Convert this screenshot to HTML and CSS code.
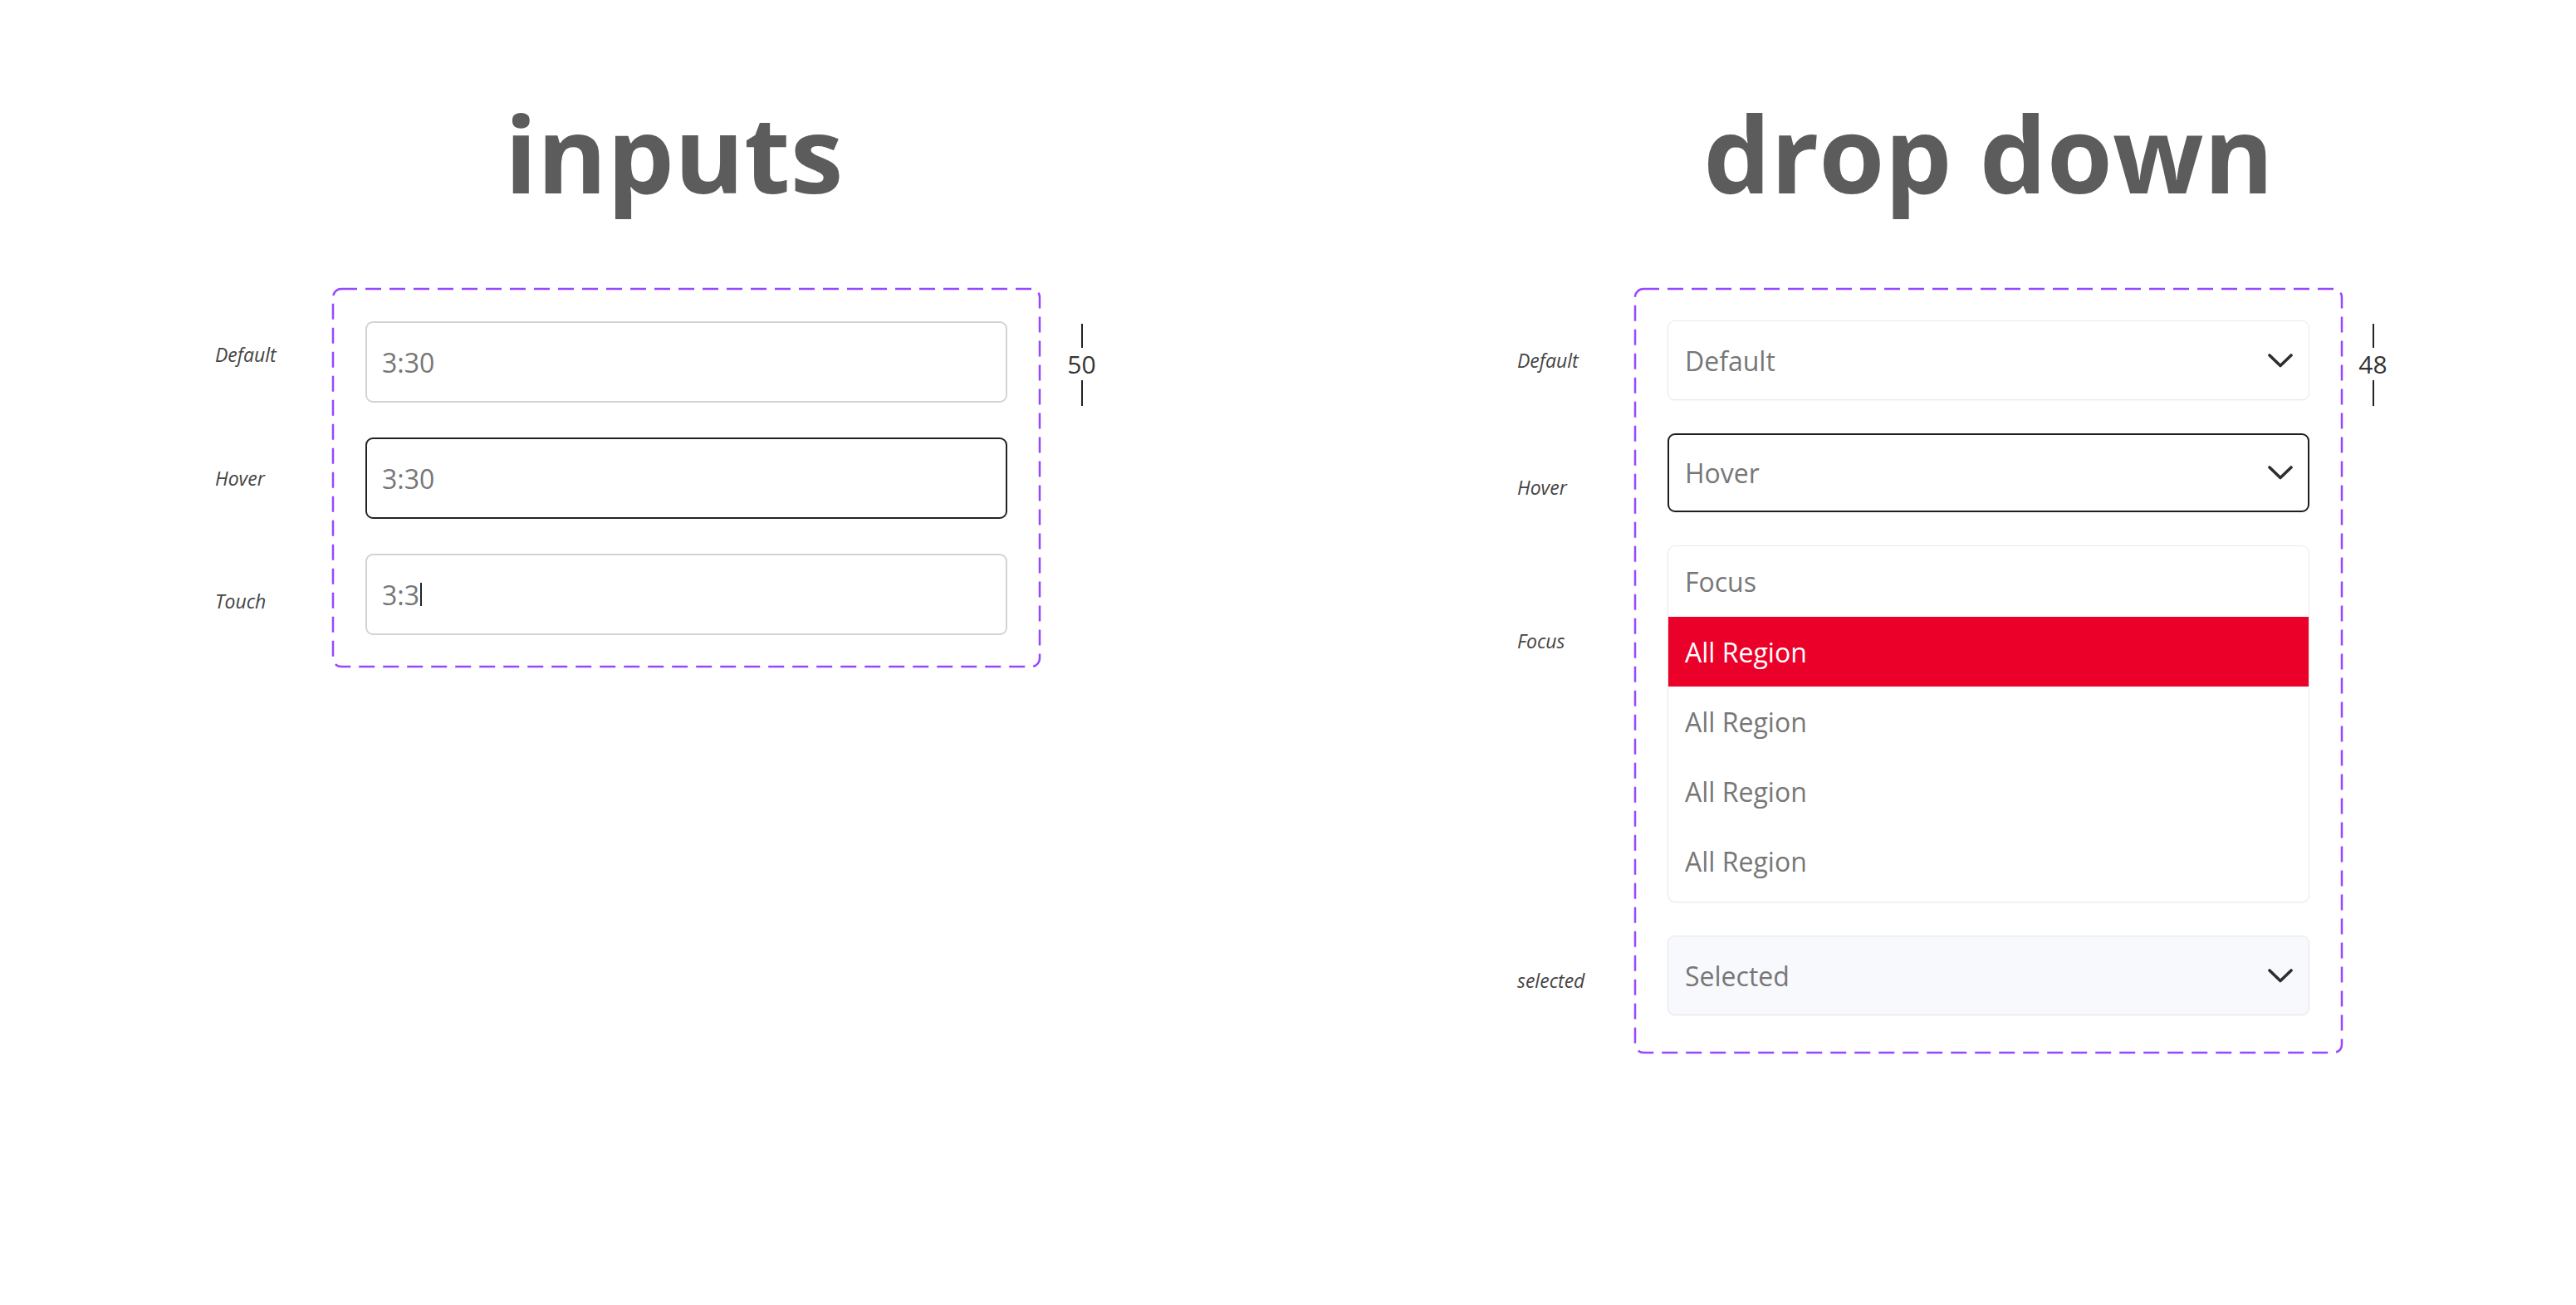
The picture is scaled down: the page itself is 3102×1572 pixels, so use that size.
FILE: index.html
```html
<!DOCTYPE html>
<html lang="en">
<head>
<meta charset="utf-8">
<title>inputs / drop down</title>
<link rel="stylesheet" href="styles.css">
</head>
<body>
<main class="page">
  <section class="section">
    <h1 class="title title-left">inputs</h1>
    <div class="box box-inputs">
      <svg class="dash" aria-hidden="true"><rect></rect></svg>
      <div class="row">
        <span class="label lbl-up">Default</span>
        <div class="input">3:30</div>
        <div class="measure m-left">
          <span class="m-line m-top"></span>
          <span class="m-text">50</span>
          <span class="m-line m-bottom"></span>
        </div>
      </div>
      <div class="row">
        <span class="label">Hover</span>
        <div class="input input-hover">3:30</div>
      </div>
      <div class="row">
        <span class="label lbl-down">Touch</span>
        <div class="input">3:3<span class="caret"></span></div>
      </div>
    </div>
  </section>

  <section class="section">
    <h1 class="title">drop down</h1>
    <div class="box box-drop">
      <svg class="dash" aria-hidden="true"><rect></rect></svg>
      <div class="row">
        <span class="label">Default</span>
        <div class="select">
          <span class="select-text">Default</span>
          <svg class="chev" viewBox="0 0 30 17" aria-hidden="true"><path d="M2 2 L15 14.5 L28 2"/></svg>
        </div>
        <div class="measure m-right">
          <span class="m-line m-top"></span>
          <span class="m-text">48</span>
          <span class="m-line m-bottom"></span>
        </div>
      </div>
      <div class="row">
        <span class="label lbl-hover">Hover</span>
        <div class="select select-hover">
          <span class="select-text">Hover</span>
          <svg class="chev" viewBox="0 0 30 17" aria-hidden="true"><path d="M2 2 L15 14.5 L28 2"/></svg>
        </div>
      </div>
      <div class="row row-top">
        <span class="label lbl-focus">Focus</span>
        <div class="list">
          <div class="list-head">Focus</div>
          <div class="list-item active">All Region</div>
          <div class="list-item">All Region</div>
          <div class="list-item">All Region</div>
          <div class="list-item">All Region</div>
        </div>
      </div>
      <div class="row">
        <span class="label lbl-sel">selected</span>
        <div class="select select-selected">
          <span class="select-text">Selected</span>
          <svg class="chev" viewBox="0 0 30 17" aria-hidden="true"><path d="M2 2 L15 14.5 L28 2"/></svg>
        </div>
      </div>
    </div>
  </section>
</main>
</body>
</html>
```

FILE: styles.css
```css
* { box-sizing: border-box; }

html, body {
  margin: 0;
  padding: 0;
  background: #ffffff;
}

body {
  width: 3102px;
  height: 1572px;
  overflow: hidden;
  font-family: "Open Sans", "Noto Sans", sans-serif;
  color: #333;
}

.page {
  display: flex;
  align-items: flex-start;
  gap: 715px;
  padding: 120px 0 0 400px;
}

.section {
  width: 853px;
  display: flex;
  flex-direction: column;
}

.title {
  margin: 0 0 99px 0;
  font-family: "Open Sans", sans-serif;
  font-weight: 700;
  font-size: 128px;
  line-height: 128px;
  color: #5c5c5c;
  text-align: center;
  letter-spacing: 0;
}

.title-left { padding-right: 30px; }

.box {
  position: relative;
  display: flex;
  flex-direction: column;
  padding: 40px 40px;
}

.box-inputs { gap: 42px; padding-bottom: 39px; }
.box-drop { gap: 40px; padding-top: 39px; padding-bottom: 46px; }

.dash {
  position: absolute;
  left: 0;
  top: 0;
  width: 100%;
  height: 100%;
  overflow: visible;
  pointer-events: none;
}

.dash rect {
  x: 1px;
  y: 1px;
  width: calc(100% - 2px);
  height: calc(100% - 2px);
  rx: 10px;
  ry: 10px;
  fill: none;
  stroke: #9747ff;
  stroke-width: 2.5px;
  stroke-dasharray: 19 10;
}

.row {
  display: flex;
  align-items: center;
}

.row-top { align-items: flex-start; }

.label {
  flex: none;
  width: 142px;
  margin: 0 39px 0 -181px;
  font-family: "Open Sans", sans-serif;
  font-style: italic;
  font-size: 23px;
  line-height: 30px;
  color: #444;
}

.lbl-up { margin-top: -18px; }
.lbl-down { margin-top: 16px; }
.lbl-hover { margin-top: 34px; }
.lbl-focus { margin-top: 100px; }
.lbl-sel { margin-top: 12px; }

.input {
  flex: 1;
  height: 98px;
  display: flex;
  align-items: center;
  padding-left: 18px;
  border: 2px solid #d3d3d3;
  border-radius: 9px;
  background: #fff;
  font-size: 32px;
  color: #777;
}

.input-hover { border-color: #222; }

.caret {
  display: inline-block;
  width: 2px;
  height: 28px;
  margin-left: 1px;
  background: #222;
}

.select {
  flex: 1;
  height: 96px;
  display: flex;
  align-items: center;
  justify-content: space-between;
  padding: 0 19px 0 20px;
  border: 1px solid #e9e9e9;
  border-radius: 9px;
  background: #fff;
  box-shadow: 0 1px 2px rgba(0, 0, 0, 0.04);
}

.select-hover {
  border: 2px solid #1e1e1e;
  padding: 0 18px 0 19px;
  height: 95px;
}

.select-selected {
  background: #f8f9fd;
  border-color: #e6e6ec;
}

.select-text {
  font-size: 32px;
  color: #777;
}

.chev {
  width: 30px;
  height: 17px;
  flex: none;
}

.chev path {
  fill: none;
  stroke: #2e2e2e;
  stroke-width: 3.6px;
  stroke-linecap: round;
  stroke-linejoin: round;
}

.list {
  flex: 1;
  border: 1px solid #e9e9e9;
  border-radius: 9px;
  background: #fff;
  padding-bottom: 7px;
  box-shadow: 0 1px 2px rgba(0, 0, 0, 0.04);
  overflow: hidden;
}

.list-head,
.list-item {
  display: flex;
  align-items: center;
  padding-left: 20px;
  font-size: 32px;
  color: #777;
}

.list-head { height: 85px; }
.list-item { height: 84px; }

.list-item.active {
  background: #eb0029;
  color: #ffffff;
}

.measure {
  flex: none;
  align-self: flex-start;
  width: 35px;
  display: flex;
  flex-direction: column;
  align-items: center;
}

.m-left { margin: 3px -107px -20px 72px; }
.m-right { margin: 4px -94px -20px 59px; }

.m-line {
  display: block;
  width: 2px;
  background: #222;
}

.m-top { height: 29px; }
.m-bottom { height: 31px; }

.m-text {
  font-size: 30px;
  line-height: 39px;
  color: #333;
}
```
